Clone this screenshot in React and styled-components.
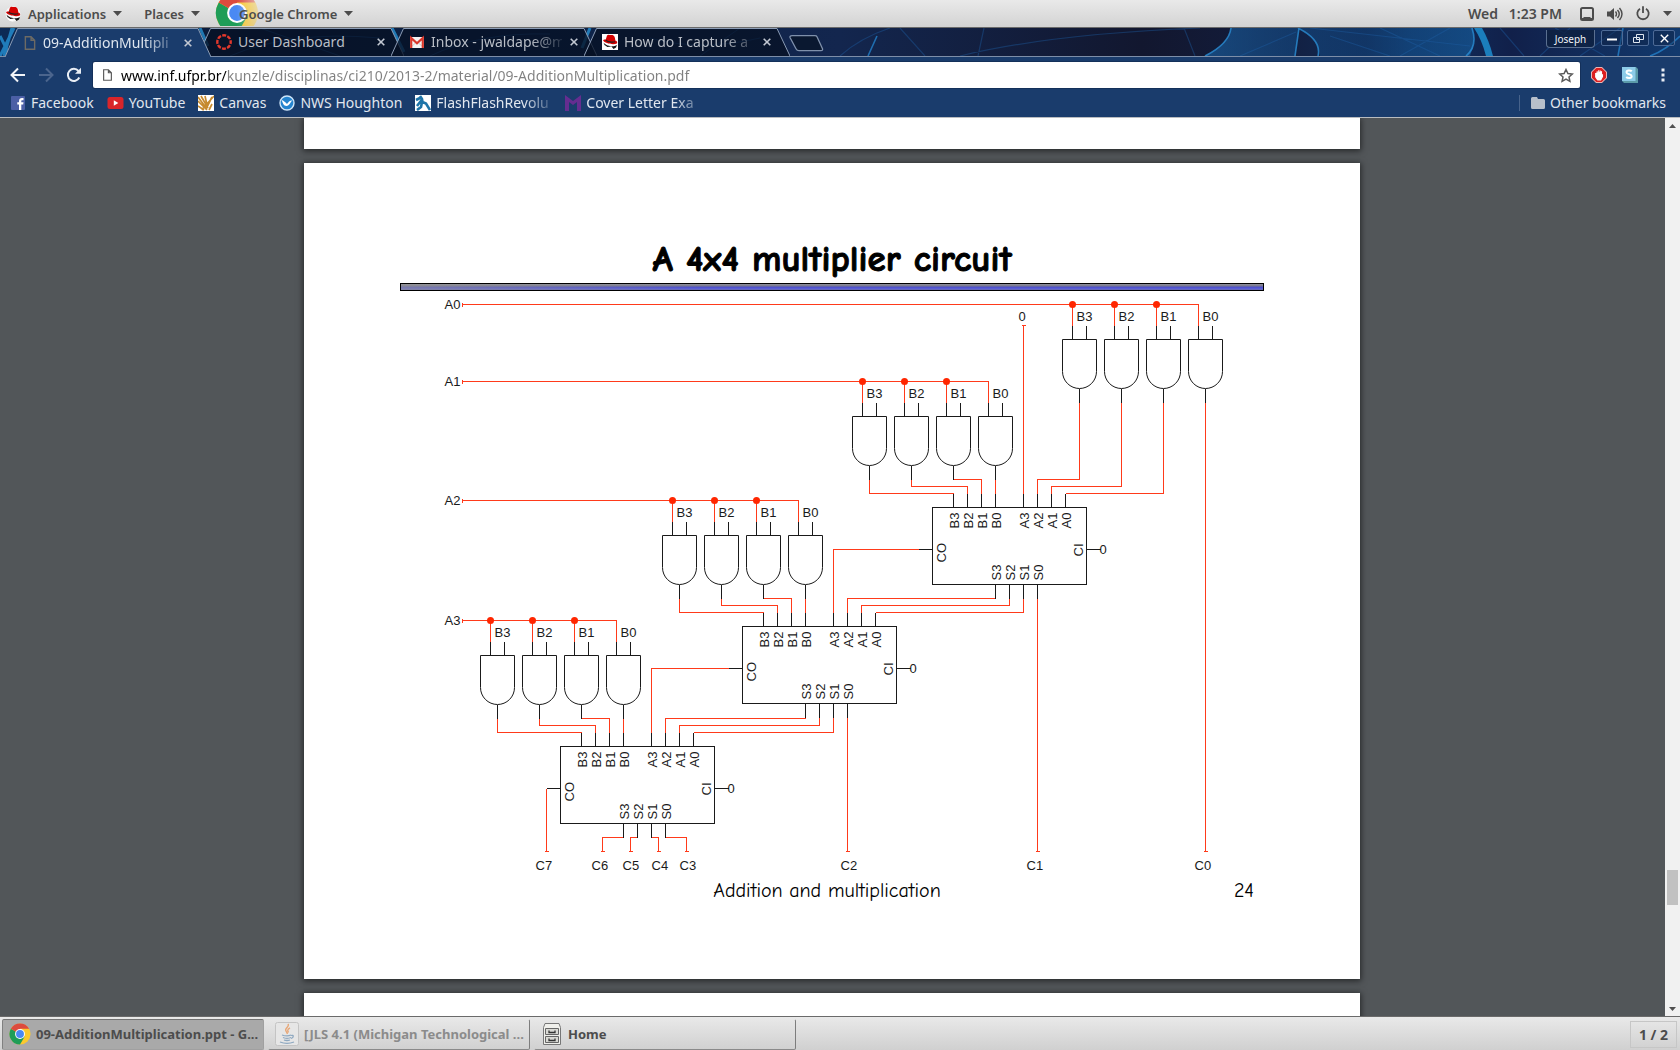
import React from "react";
import styled, { createGlobalStyle, css } from "styled-components";

const uiFont = `"Noto Sans", "Open Sans", sans-serif`;
const slideFont = `"Comic Sans MS", "Comic Neue", Lato, sans-serif`;
const navy = "#1a3c6c";

const GlobalStyle = createGlobalStyle`
  * { box-sizing: border-box; }
  html, body { margin: 0; height: 100%; overflow: hidden; }
  body { font-family: ${uiFont}; font-size: 14px; }
  button, input { font: inherit; color: inherit; border: 0; padding: 0; margin: 0; background: none; }
  svg { display: block; flex: none; }
`;

const Desktop = styled.div`
  height: 100vh;
  display: flex;
  flex-direction: column;
`;

/* ---------- desktop panel ---------- */

const TopPanel = styled.header`
  flex: none;
  height: 28px;
  display: flex;
  align-items: center;
  padding: 0 8px 0 5px;
  color: #4c4c4c;
  font-size: 13px;
  font-weight: 600;
  background: linear-gradient(#e9e9e9, #d3d3d3);
  border-bottom: 1px solid #6a6a6a;
`;

const PanelButton = styled.button`
  display: flex;
  align-items: center;
  gap: 7px;
  height: 27px;
  white-space: nowrap;
  margin-left: ${(p) => p.$before || 0}px;
`;

const AppMenu = styled(PanelButton)`
  position: relative;
  padding-left: 24px;
`;

const AppBadge = styled.span`
  position: absolute;
  left: 0;
  top: 0;
  height: 26px;
  display: flex;
  align-items: center;
  overflow: hidden;
  mask-image: linear-gradient(90deg, #000 50%, rgba(0, 0, 0, 0.3) 100%);
`;

const Front = styled.span`
  position: relative;
`;

const PanelRight = styled.div`
  margin-left: auto;
  display: flex;
  align-items: center;
  gap: 13px;
`;

const Clock = styled.time`
  margin-right: 5px;
  font-size: 14px;
  white-space: pre;
`;

/* ---------- browser ---------- */

const TabStrip = styled.div`
  flex: none;
  position: relative;
  height: 29px;
  display: flex;
  padding-left: 5px;
  background: #101b38;
  border-bottom: 1px solid #7d8ea8;
`;

const Wallpaper = styled.svg`
  position: absolute;
  inset: 0;
  width: 100%;
  height: 100%;
`;

const TabBox = styled.div`
  position: relative;
  width: 206px;
  height: ${(p) => (p.$active ? 29 : 28)}px;
  margin-right: -13px;
  padding: 0 16px 0 18px;
  display: flex;
  align-items: center;
  gap: 5px;
  color: ${(p) => (p.$active ? "#dfe6ef" : "#b9bec6")};
  z-index: ${(p) => (p.$active ? 2 : 1)};
`;

const TabShape = styled.svg`
  position: absolute;
  inset: 0;
  width: 100%;
  height: 100%;
`;

const TabTitle = styled.button`
  position: relative;
  flex: 1;
  min-width: 0;
  display: flex;
  align-items: center;
  gap: 6px;
`;

const FadeText = styled.span`
  flex: 1;
  min-width: 0;
  text-align: left;
  white-space: nowrap;
  line-height: 20px;
  ${(p) =>
    p.$fade &&
    css`
      mask-image: linear-gradient(90deg, #000 76%, rgba(0, 0, 0, 0.15) 100%);
    `}
`;

const IconButton = styled.button`
  position: relative;
  flex: none;
  display: grid;
  place-items: center;
  width: ${(p) => p.$size}px;
  height: ${(p) => p.$size}px;
`;

const NewTab = styled.button`
  position: relative;
  margin: 7px 0 0 12px;
  align-self: flex-start;
`;

const WindowButtons = styled.div`
  position: relative;
  margin-left: auto;
  padding: 2px 5px 0 0;
  display: flex;
  align-items: flex-start;
  gap: 4px;
`;

const Profile = styled.button`
  height: 18px;
  width: 49px;
  margin-right: 2px;
  font-size: 10px;
  line-height: 16px;
  color: #f2f4f7;
  background: rgba(14, 32, 64, 0.8);
  border: 1px solid #5a6f90;
  border-top: 0;
  border-radius: 0 0 4px 4px;
`;

const WindowButton = styled.button`
  width: 22px;
  height: 16px;
  display: grid;
  place-items: center;
  border: 1px solid #4d6a96;
  border-radius: 2px;
  background: rgba(14, 32, 64, 0.4);
`;

const Toolbar = styled.div`
  flex: none;
  height: 33px;
  display: flex;
  align-items: center;
  gap: 8px;
  padding: 3px 7px 0 8px;
  background: ${navy};
`;

const Omnibox = styled.div`
  flex: 1;
  min-width: 0;
  height: 26px;
  margin: 0 3px 0 0;
  padding: 0 5px 0 10px;
  display: flex;
  align-items: center;
  gap: 9px;
  background: #fff;
  border-radius: 2px;
  box-shadow: 0 0 0 1px #14305a;
`;

const AddressInput = styled.input`
  flex: 1;
  min-width: 0;
  height: 24px;
  outline: 0;
  color: #808080;
  background: linear-gradient(90deg, #000 106px, #808080 106px);
  background-clip: text;
  -webkit-text-fill-color: transparent;
`;

const Extensions = styled.div`
  display: flex;
  align-items: center;
  gap: 15px;
`;

const Nav = styled.div`
  display: flex;
  gap: 8px;
  margin-right: 1px;
`;

const Bookmarks = styled.nav`
  flex: none;
  height: 28px;
  display: flex;
  align-items: center;
  gap: 13px;
  padding: 0 14px 1px 10px;
  background: ${navy};
  border-bottom: 1px solid #b9bcc0;
`;

const Bookmark = styled.a`
  display: flex;
  align-items: center;
  gap: 5px;
  color: #e1e7ef;
  text-decoration: none;
  white-space: nowrap;
  ${(p) =>
    p.$long &&
    css`
      width: 137px;
    `}
`;

const OtherBookmarks = styled(Bookmark)`
  margin-left: auto;
  padding-left: 11px;
  border-left: 1px solid #47638b;
  line-height: 16px;
`;

/* ---------- document viewer ---------- */

const Viewer = styled.main`
  flex: 1;
  min-height: 0;
  display: flex;
  background: #525659;
`;

const Pages = styled.div`
  flex: 1;
  min-width: 0;
  padding-right: 1px;
  overflow: hidden;
  display: flex;
  flex-direction: column;
  align-items: center;
  gap: 14px;
`;

const Sheet = styled.section`
  flex: none;
  width: 1056px;
  max-width: 100%;
  background: #fff;
  box-shadow: 0 1px 6px 1px rgba(0, 0, 0, 0.55);
`;

const SheetEdge = styled(Sheet)`
  height: ${(p) => p.$height}px;
`;

const Slide = styled(Sheet)`
  padding: 72px 96px;
  font-family: ${slideFont};
  color: #000;
`;

const SlideTitle = styled.h1`
  margin: 0;
  font-size: 37px;
  line-height: 48px;
  font-weight: 700;
  text-align: center;
  -webkit-text-stroke: 1px #000;
`;

const SlideRule = styled.div`
  height: 8px;
  border: 1px solid #000;
  background: linear-gradient(90deg, rgba(150, 150, 150, 0.6), transparent 35%),
    linear-gradient(#8e8e9c, #77778f 35%, #4a4ccc 50%, #5c60d6 80%, #6c6ca8);
`;

const Circuit = styled.svg`
  width: 100%;
  height: auto;
`;

const SlideFooter = styled.footer`
  display: grid;
  grid-template-columns: 1fr auto 1fr;
  padding-right: 10px;
  font-size: 20px;
  line-height: 32px;
`;

const SlideNumber = styled.span`
  text-align: right;
`;

const ScrollTrack = styled.div`
  width: 15px;
  display: flex;
  flex-direction: column;
  background: #f1f1f1;
`;

const ScrollSpace = styled.div`
  flex: ${(p) => p.$share};
`;

const ScrollThumb = styled.div`
  height: 35px;
  margin: 0 2px;
  background: #c1c1c1;
`;

/* ---------- taskbar ---------- */

const Taskbar = styled.footer`
  flex: none;
  height: 34px;
  display: flex;
  align-items: center;
  gap: 4px;
  padding: 1px 3px 0 2px;
  color: #4c4c4c;
  font-size: 13px;
  font-weight: 700;
  background: linear-gradient(#e9e9e9, #d0d0d0);
  border-top: 1px solid #6a6a6a;
`;

const Task = styled.button`
  width: 262px;
  height: 31px;
  padding: 0 6px;
  display: flex;
  align-items: center;
  gap: 5px;
  white-space: nowrap;
  border-radius: 2px;
  border: 1px solid transparent;
  border-right-color: #7d7d7d;
  border-bottom-color: #8a8a8a;
  color: ${(p) => (p.$dim ? "#8b8b8b" : "#4c4c4c")};
  ${(p) =>
    p.$active &&
    css`
      background: #a9a9a9;
      border-color: #737373 #a0a0a0 #a0a0a0 #808080;
    `}
`;

const Workspace = styled.div`
  margin-left: auto;
  width: 47px;
  height: 27px;
  line-height: 25px;
  text-align: center;
  font-size: 14px;
  border: 1px solid #c6c6c6;
`;

/* ---------- drawings ---------- */

const Caret = ({ color = "#4c4c4c" }) => (
  <svg width="9" height="5" viewBox="0 0 9 5"><path d="M0 0h9L4.5 5z" fill={color} /></svg>
);

const RedHat = ({ plain }) => (
  <svg width="16" height="16" viewBox="0 0 16 16">
    {plain ? <rect width="16" height="16" fill="#fff" /> : <circle cx="8" cy="8" r="7.5" fill="#f8f8f8" />}
    <path d="M1 7.500c1 3.500 9 6.500 14 3.500l-1 2.500-2.500 1.500-2-2.500-4.500.5-2.500-2z" fill="#161616" />
    <path d="M3.800 5.500L5 1.500c1.500-1.500 3 0 4.500-.5C12 1 13 2.500 13.300 6.500c2 .7 2.300 2 1.500 3C11 11.500 2.500 9 1.200 6.800c-.2-1 1-1.500 2.600-1.300z" fill="#d40000" />
    <path d="M3.600 5.800c2 2 6.500 3 9.500 2" stroke="#222" strokeWidth="1.200" fill="none" />
    <path d="M3 11.500c1 .5 2 2 4 2l1.500 1.500c-2 .8-5 0-5.500-3.500z" fill="#fff" />
  </svg>
);

const ChromeIcon = ({ size }) => (
  <svg width={size} height={size} viewBox="0 0 24 24">
    <circle cx="12" cy="12" r="11.500" fill="#fbc92d" />
    <path d="M12 12L2.040 6.250A11.500 11.500 0 0 0 12 23.500l5-8.600z" fill="#1f9d58" />
    <path d="M12 12L2.040 6.250A11.500 11.500 0 0 1 21.960 6.250H12z" fill="#dd4b3e" />
    <circle cx="12" cy="12" r="5.400" fill="#fff" />
    <circle cx="12" cy="12" r="4.300" fill="#4a89f3" />
  </svg>
);

const FileIcon = ({ color, w = 10, h = 13 }) => (
  <svg width={w} height={h} viewBox="0 0 10 13">
    <path d="M.7.7h5.300l3.300 3.300v8.300H.7zM6 .7V4h3.300" fill="none" stroke={color} strokeWidth="1.300" />
  </svg>
);

const CanvasRing = () => (
  <svg width="16" height="16" viewBox="0 0 16 16">
    <circle cx="8" cy="8" r="6.700" fill="none" stroke="#e2382c" strokeWidth="2.400" strokeDasharray="4 1.260" strokeDashoffset="2" />
  </svg>
);

const GmailIcon = () => (
  <svg width="16" height="16" viewBox="0 0 16 16">
    <rect x="1" y="3" width="14" height="11" rx="1" fill="#f4f4f4" />
    <path d="M1 14l5.500-5M15 14L9.500 9" stroke="#ccc" fill="none" />
    <path d="M2.200 14V4L8 9.300 13.800 4v10" fill="none" stroke="#d9372b" strokeWidth="2.200" />
  </svg>
);

const Cross = ({ size = 8, color, w = 1.6 }) => (
  <svg width={size} height={size} viewBox="0 0 8 8"><path d="M.7.7l6.600 6.600M7.300.7L.7 7.300" stroke={color} strokeWidth={w} fill="none" /></svg>
);

const Arrow = ({ color, flip }) => (
  <svg width="16" height="16" viewBox="0 0 16 16">
    <path d={flip ? "M1 8h13M8 1.500L14.500 8 8 14.500" : "M15 8H2M8 1.500L1.500 8 8 14.500"} fill="none" stroke={color} strokeWidth="2" />
  </svg>
);

const Reload = () => (
  <svg width="16" height="16" viewBox="0 0 16 16">
    <path d="M13.300 10.500A6 6 0 1 1 12.500 4" fill="none" stroke="#e9eef5" strokeWidth="2" />
    <path d="M15 .8v6H9z" fill="#e9eef5" />
  </svg>
);

const Facebook = () => (
  <svg width="16" height="16" viewBox="0 0 16 16">
    <rect x="1" y="1" width="14" height="14" rx="1" fill="#4b5fa5" />
    <path d="M9 15V9.500H7.300V7.300H9V6c0-2 1-3 3-3h1.500v2.200h-1.200c-.8 0-1 .3-1 1v1.100h2.200L13.200 9.500h-1.900V15z" fill="#fff" />
  </svg>
);

const YouTube = () => (
  <svg width="17" height="16" viewBox="0 0 17 16">
    <rect x=".5" y="2" width="16" height="12" rx="2.500" fill="#d9252a" />
    <path d="M6.800 5.300v5.400L11.300 8z" fill="#fff" />
  </svg>
);

const CanvasMark = () => (
  <svg width="16" height="16" viewBox="0 0 16 16">
    <rect width="16" height="16" fill="#fff" />
    <path d="M0 2l9 12M3 1l7 12M7 1l2 9M0 6l9 9M8 14L14 2M7 11L16 1M0 11l6 4M11 15l3-6M4 15l5-8" stroke="#c68a2e" strokeWidth="1.700" fill="none" />
  </svg>
);

const Noaa = () => (
  <svg width="16" height="16" viewBox="0 0 16 16">
    <circle cx="8" cy="8" r="7" fill="#2584cf" stroke="#cfe6fa" strokeWidth="1.400" />
    <path d="M2.500 5c2 .5 3.500 2 5.500 4 1.500-2 3-4 5.500-3.500-2 1-3 5.500-6 5.500S4 8 2.500 5z" fill="#fff" />
  </svg>
);

const FlashMark = () => (
  <svg width="16" height="16" viewBox="0 0 16 16">
    <rect width="16" height="16" fill="#fff" />
    <path d="M5 1l2 3 .5 3 3.500 1.500 4 6.500M7 4.500L2 11M7 7l-1 5-4 3M1 5l4-2" stroke="#1d74a8" strokeWidth="2.600" fill="none" />
  </svg>
);

const MonsterMark = () => (
  <svg width="16" height="16" viewBox="0 0 16 16"><path d="M0 0l8 6 8-6v16h-4V7L8 10 4 7v9H0z" fill="#652d90" /></svg>
);

const Folder = () => (
  <svg width="14" height="12" viewBox="0 0 14 12"><path d="M0 1.500Q0 0 1.500 0H6l1 2h5.500Q14 2 14 3.500v7q0 1.500-1.500 1.500h-11Q0 12 0 10.500z" fill="#b7bfca" /></svg>
);

const Star = () => (
  <svg width="16" height="15" viewBox="0 0 16 15">
    <path d="M8 1.500l1.900 4 4.400.5-3.300 3 .9 4.400L8 11.200l-3.900 2.200L5 9 1.700 6l4.400-.5z" fill="none" stroke="#5a5a5a" strokeWidth="1.500" />
  </svg>
);

const AdBlock = () => (
  <svg width="16" height="16" viewBox="0 0 16 16">
    <path d="M5 0h6l5 5v6l-5 5H5l-5-5V5z" fill="#e9b6b6" />
    <path d="M5.300 1h5.400L15 5.300v5.400L10.700 15H5.300L1 10.700V5.300z" fill="#dc1f1f" />
    <path d="M4.700 6v4l2 3h3l1.800-3.500V8l-1 1V4.200M6.200 9V4.200M7.700 8V3.200M9.200 8V3.500" stroke="#fff" strokeWidth="1.100" fill="#fff" />
  </svg>
);

const Stylish = () => (
  <svg width="16" height="16" viewBox="0 0 16 16">
    <path d="M0 0h14l2 2v14H2l-2-2z" fill="#5b9aa8" />
    <rect width="13.500" height="14" fill="#8ccbe8" />
    <path d="M9.800 4.300C8.500 3 4.500 3 4.500 5.200S9.700 7 9.700 9.200s-4 2.300-5.500.8" fill="none" stroke="#fff" strokeWidth="2" />
  </svg>
);

const Dots = () => (
  <svg width="4" height="14" viewBox="0 0 4 14"><path d="M.5.5h3v3h-3zM.5 5.500h3v3h-3zM.5 10.500h3v3h-3z" fill="#e9eef5" /></svg>
);

const Screen = () => (
  <svg width="14" height="14" viewBox="0 0 14 14">
    <rect x="1" y="1" width="12" height="12" rx="1.500" fill="none" stroke="#4c4c4c" strokeWidth="2" />
    <path d="M1 11h2.500v-1h7v1H13v2H1z" fill="#4c4c4c" />
  </svg>
);

const Volume = () => (
  <svg width="16" height="14" viewBox="0 0 16 14">
    <path d="M0 4.500h3L7 1v12L3 9.500H0z" fill="#4c4c4c" />
    <path d="M8.500 4.500q2 2.500 0 5M10.500 3q3.500 4 0 8M12.500 1q5 6 0 12" fill="none" stroke="#4c4c4c" strokeWidth="1.400" />
  </svg>
);

const Power = () => (
  <svg width="14" height="15" viewBox="0 0 14 15">
    <path d="M4 2.700a5.700 5.700 0 1 0 6 0M7 .3V7" fill="none" stroke="#4c4c4c" strokeWidth="1.800" />
  </svg>
);

const JavaIcon = () => (
  <svg width="24" height="24" viewBox="0 0 24 24">
    <rect x=".5" y=".5" width="23" height="23" rx="2" fill="#e6e6e6" stroke="#c4c4c4" />
    <path d="M13 2c2 3-4 4-2 7l1.500 3M15 6c-3 1.500-2.500 3-1.500 4.500" fill="none" stroke="#e8a777" strokeWidth="1.400" />
    <path d="M7 13c3 1 7 1 9 0M8 15.500c2 1 6 1 8 0M9 18c2 .7 4 .7 6 0M16 13.500c3-1 3 2 0 3M5 20c4 1.500 10 1.500 14 0" fill="none" stroke="#8ea8c0" strokeWidth="1.300" />
  </svg>
);

const Cabinet = () => (
  <svg width="22" height="22" viewBox="0 0 22 22">
    <path d="M4 .5h14l1.500 4v17H2.500v-17z" fill="#f0f0ec" stroke="#777" />
    <path d="M4.500 5.500h13v6h-13zM4.500 13.500h13v6h-13z" fill="#d9d9d4" stroke="#666" />
    <path d="M8 7.500v2h6v-2M8 15.500v2h6v-2" fill="none" stroke="#333" strokeWidth="1.300" />
  </svg>
);

const StripWallpaper = () => (
  <Wallpaper viewBox="0 0 1680 28" preserveAspectRatio="none" aria-hidden="true">
    <defs>
      <linearGradient id="sky">
        <stop offset="0" stopColor="#0c2a55" />
        <stop offset=".12" stopColor="#0b1c3c" />
        <stop offset=".3" stopColor="#0c2348" />
        <stop offset=".5" stopColor="#13264e" />
        <stop offset=".68" stopColor="#12172f" />
        <stop offset=".75" stopColor="#131c3b" />
        <stop offset=".84" stopColor="#10305f" />
        <stop offset=".9" stopColor="#11204a" />
        <stop offset="1" stopColor="#123a6e" />
      </linearGradient>
      <linearGradient id="veil">
        <stop offset="0" stopColor="#1b6db5" />
        <stop offset=".3" stopColor="#15508c" />
        <stop offset=".6" stopColor="#123f74" />
        <stop offset="1" stopColor="#1766a8" />
      </linearGradient>
    </defs>
    <rect width="1680" height="28" fill="url(#sky)" />
    <path d="M1205 28q24-12 26-28h68q-2 14-4 28zM1300 0q20 12 20 28h150q6-14 2-28z" fill="url(#veil)" opacity=".55" />
    <path d="M1205 28q24-12 26-28M1299 0l-4 28M1298 0q24 12 20 28M1472 0q6 18-6 28" fill="none" stroke="#2b8fd6" strokeWidth="1.600" opacity=".8" />
    <path d="M1474 0q8 12 12 28h7q-4-16-11-28z" fill="#1f9ce0" opacity=".75" />
    <path d="M840 28q20-18 50-28M960 28q90-22 240-28M978 28l6-28M900 0l25 28M1184 0l11 28M1240 28l56-24M1330 8l60 20M1310 0l160 18M1380 0l60 28M1400 28l50-28M1500 0l24 28M1540 28l30-28M1555 0l50 28M1580 28l40-28" fill="none" stroke="#1d5fa6" strokeWidth="1.200" opacity=".4" />
    <path d="M868 28l9-20M1618 28l5-28M1650 28q16-6 30-20" fill="none" stroke="#2380c8" strokeWidth="1.600" opacity=".8" />
    <path d="M0 8l10 20M0 28L14 0M200 0l8 18M392 0l12 24M590 0l-8 20M12 0L4 28" fill="none" stroke="#2aa0e6" strokeWidth="3" opacity=".7" />
    <path d="M230 28q60-26 150-18M260 0l80 28M430 28q50-24 120-22M650 10q50 14 110 0M700 28l40-28" fill="none" stroke="#1c5593" opacity=".8" />
  </Wallpaper>
);

/* ---------- multiplier circuit ---------- */

const WIRE = "#ff3a1a";
const INK = "#1a1a1a";

const rows = [
  { name: "A0", y: 304, x: 1072 },
  { name: "A1", y: 381, x: 862 },
  { name: "A2", y: 500, x: 672 },
  { name: "A3", y: 620, x: 490 },
];

const adders = [
  { x: 932, y: 507 },
  { x: 742, y: 626 },
  { x: 560, y: 746 },
];

const Label = styled.text`
  font-family: "Liberation Sans", Arial, sans-serif;
  font-size: 13px;
  fill: #1a1a1a;
`;

const Wire = ({ d }) => <path d={d} fill="none" stroke={WIRE} shapeRendering="crispEdges" />;
const Lead = ({ d }) => <path d={d} fill="none" stroke={INK} shapeRendering="crispEdges" />;

const Upright = ({ x, y, children }) => (
  <Label x="0" y="0" transform={`translate(${x} ${y}) rotate(-90)`}>{children}</Label>
);

const GateRow = ({ name, y, x }) => (
  <g>
    <Label x="444" y={y + 4}>{name}</Label>
    <Wire d={`M462 ${y - 2}v4M462 ${y}H${x + 126}V${y + 21}`} />
    {[3, 2, 1, 0].map((bit, i) => {
      const px = x + i * 42;
      return (
        <g key={bit}>
          {i < 3 && <Wire d={`M${px} ${y}v21`} />}
          {i < 3 && <circle cx={px} cy={y} r="3.500" fill="#ff2600" />}
          <Lead d={`M${px} ${y + 21}v14M${px + 14} ${y + 21}v14M${px + 7} ${y + 84}v14`} />
          <path d={`M${px - 10} ${y + 35}h34v32a17 17 0 0 1 -34 0z`} fill="#fff" stroke={INK} />
          <Label x={px + 4} y={y + 16}>{`B${bit}`}</Label>
        </g>
      );
    })}
  </g>
);

const Adder = ({ x, y }) => (
  <g>
    <rect x={x} y={y} width="154" height="77" fill="none" stroke={INK} />
    {[3, 2, 1, 0].map((bit, i) => {
      const b = x + 21 + i * 14;
      const a = b + 70;
      const s = b + 42;
      return (
        <g key={bit}>
          <Lead d={`M${b} ${y - 14}v14M${a} ${y - 14}v14M${s} ${y + 77}v14`} />
          <Upright x={b + 5} y={y + 21}>{`B${bit}`}</Upright>
          <Upright x={a + 5} y={y + 21}>{`A${bit}`}</Upright>
          <Upright x={s + 5} y={y + 73}>{`S${bit}`}</Upright>
        </g>
      );
    })}
    <Lead d={`M${x - 14} ${y + 42}h14M${x + 154} ${y + 42}h14`} />
    <Upright x={x + 13} y={y + 55}>CO</Upright>
    <Upright x={x + 150} y={y + 49}>CI</Upright>
    <Label x={x + 167} y={y + 46}>0</Label>
  </g>
);

const outputs = [
  ["C7", 535], ["C6", 591], ["C5", 622], ["C4", 651], ["C3", 679], ["C2", 840], ["C1", 1026], ["C0", 1194],
];

const MultiplierCircuit = () => (
  <Circuit viewBox="400 291 864 584" role="img" aria-label="4x4 multiplier circuit">
    <g transform="translate(.5 .5)">
      {adders.map(({ x, y }, n) => {
        const out = rows[n + 1].x + 7;
        const b = x + 21;
        return (
          <g key={x}>
            <Wire d={`M${out} ${y - 28}v14H${b}`} />
            <Wire d={`M${out + 42} ${y - 28}v7H${b + 14}v7`} />
            <Wire d={`M${out + 84} ${y - 28}H${b + 28}v14`} />
            <Wire d={`M${out + 126} ${y - 28}v14`} />
          </g>
        );
      })}
      <Wire d="M1023 325V493M1021 325h4" />
      <Wire d="M1079 402V479H1037V493" />
      <Wire d="M1121 402V486H1051V493" />
      <Wire d="M1163 402V493H1065" />
      <Wire d="M1205 402V851" />
      {adders.slice(1).map(({ x, y }, n) => {
        const top = adders[n];
        const s = top.x + 63;
        const a = x + 91;
        return (
          <g key={x}>
            <Wire d={`M${top.x - 14} ${top.y + 42}H${a}V${y - 14}`} />
            <Wire d={`M${s} ${top.y + 91}V${y - 28}H${a + 14}V${y - 14}`} />
            <Wire d={`M${s + 14} ${top.y + 91}V${y - 21}H${a + 28}V${y - 14}`} />
            <Wire d={`M${s + 28} ${top.y + 91}V${y - 14}H${a + 42}`} />
            <Wire d={`M${s + 42} ${top.y + 91}V851`} />
          </g>
        );
      })}
      <Wire d="M546 788V851M623 837H602V851M637 837H630V851M651 837H658V851M665 837H686V851" />
      {[546, 602, 630, 658, 686, 847, 1037, 1205].map((x) => (
        <Wire key={x} d={`M${x - 2} 851h4`} />
      ))}
      {rows.map((row) => <GateRow key={row.name} {...row} />)}
      {adders.map((adder) => <Adder key={adder.x} {...adder} />)}
      <Label x="1018" y="320">0</Label>
      {outputs.map(([name, x]) => <Label key={name} x={x} y="869">{name}</Label>)}
    </g>
  </Circuit>
);

/* ---------- page ---------- */

const tabs = [
  { title: "09-AdditionMultipli", icon: <FileIcon color="#6d6a64" w={14} h={14} />, active: true, fade: true },
  { title: "User Dashboard", icon: <CanvasRing /> },
  { title: "Inbox - jwaldape@m", icon: <GmailIcon />, fade: true },
  { title: "How do I capture a", icon: <RedHat plain />, fade: true },
];

const bookmarks = [
  { title: "Facebook", icon: <Facebook /> },
  { title: "YouTube", icon: <YouTube /> },
  { title: "Canvas", icon: <CanvasMark /> },
  { title: "NWS Houghton", icon: <Noaa /> },
  { title: "FlashFlashRevolu", icon: <FlashMark />, long: true },
  { title: "Cover Letter Exa", icon: <MonsterMark />, long: true },
];

const Tab = ({ title, icon, active, fade }) => (
  <TabBox $active={active}>
    <TabShape viewBox="0 0 206 28" preserveAspectRatio="none" aria-hidden="true">
      <path d="M0 28L12.500.5H193L206 28" fill={active ? navy : "rgba(7,17,36,.78)"} stroke="#8b9cb5" vectorEffect="non-scaling-stroke" />
    </TabShape>
    <TabTitle>
      {icon}
      <FadeText $fade={fade}>{title}</FadeText>
    </TabTitle>
    <IconButton $size={14} aria-label="Close tab"><Cross color="#c2c8d2" /></IconButton>
  </TabBox>
);

export default function App() {
  return (
    <Desktop>
      <GlobalStyle />
      <TopPanel>
        <PanelButton><RedHat />Applications<Caret /></PanelButton>
        <PanelButton $before={22}>Places<Caret /></PanelButton>
        <AppMenu $before={15}>
          <AppBadge><ChromeIcon size={44} /></AppBadge>
          <Front>Google Chrome</Front>
          <Caret />
        </AppMenu>
        <PanelRight>
          <Clock>{"Wed   1:23 PM"}</Clock>
          <Screen />
          <Volume />
          <Power />
          <Caret />
        </PanelRight>
      </TopPanel>

      <TabStrip>
        <StripWallpaper />
        {tabs.map((tab) => <Tab key={tab.title} {...tab} />)}
        <NewTab aria-label="New tab">
          <svg width="35" height="17" viewBox="0 0 35 17">
            <path d="M3 .7h23q1.500 0 2 1l5.500 12q.5 2-1.500 2H10q-2 0-3-2L1 2.500Q.5.700 3 .700z" fill="#0a1830" stroke="#7f90ab" strokeWidth="1.300" />
          </svg>
        </NewTab>
        <WindowButtons>
          <Profile>Joseph</Profile>
          <WindowButton aria-label="Minimize">
            <svg width="10" height="8" viewBox="0 0 10 8"><path d="M0 5.500h10" stroke="#fff" strokeWidth="2" /></svg>
          </WindowButton>
          <WindowButton aria-label="Restore">
            <svg width="11" height="9" viewBox="0 0 11 9"><path d="M3.500.5h7v5h-7zM.5 3.500h6v5h-6z" fill="none" stroke="#dfe6ef" /></svg>
          </WindowButton>
          <WindowButton aria-label="Close"><Cross size={9} color="#fff" w={1.2} /></WindowButton>
        </WindowButtons>
      </TabStrip>

      <Toolbar>
        <Nav>
          <IconButton $size={20} aria-label="Back"><Arrow color="#f1f4f8" /></IconButton>
          <IconButton $size={20} aria-label="Forward"><Arrow color="#4b658d" flip /></IconButton>
          <IconButton $size={20} aria-label="Reload"><Reload /></IconButton>
        </Nav>
        <Omnibox>
          <FileIcon color="#5a5a5a" w={9} h={12} />
          <AddressInput
            aria-label="Address"
            defaultValue="www.inf.ufpr.br/kunzle/disciplinas/ci210/2013-2/material/09-AdditionMultiplication.pdf"
          />
          <IconButton $size={18} aria-label="Bookmark this page"><Star /></IconButton>
        </Omnibox>
        <Extensions>
          <IconButton $size={16} aria-label="AdBlock"><AdBlock /></IconButton>
          <IconButton $size={16} aria-label="Stylish"><Stylish /></IconButton>
          <IconButton $size={20} aria-label="Menu"><Dots /></IconButton>
        </Extensions>
      </Toolbar>

      <Bookmarks>
        {bookmarks.map(({ title, icon, long }) => (
          <Bookmark key={title} href="#" $long={long}>
            {icon}
            <FadeText $fade={long}>{title}</FadeText>
          </Bookmark>
        ))}
        <OtherBookmarks href="#"><Folder />Other bookmarks</OtherBookmarks>
      </Bookmarks>

      <Viewer>
        <Pages>
          <SheetEdge $height={31} />
          <Slide>
            <SlideTitle>A 4x4 multiplier circuit</SlideTitle>
            <SlideRule />
            <MultiplierCircuit />
            <SlideFooter>
              <span />
              <span>Addition and multiplication</span>
              <SlideNumber>24</SlideNumber>
            </SlideFooter>
          </Slide>
          <SheetEdge $height={816} />
        </Pages>
        <ScrollTrack>
          <IconButton $size={15} aria-label="Scroll up">
            <svg width="7" height="4" viewBox="0 0 7 4"><path d="M0 4h7L3.500 0z" fill="#505050" /></svg>
          </IconButton>
          <ScrollSpace $share={737} />
          <ScrollThumb />
          <ScrollSpace $share={96} />
          <IconButton $size={15} aria-label="Scroll down">
            <svg width="7" height="4" viewBox="0 0 7 4"><path d="M0 0h7L3.500 4z" fill="#505050" /></svg>
          </IconButton>
        </ScrollTrack>
      </Viewer>

      <Taskbar>
        <Task $active><ChromeIcon size={22} />09-AdditionMultiplication.ppt - G...</Task>
        <Task $dim><JavaIcon />[JLS 4.1 (Michigan Technological ...</Task>
        <Task><Cabinet />Home</Task>
        <Workspace>1 / 2</Workspace>
      </Taskbar>
    </Desktop>
  );
}
